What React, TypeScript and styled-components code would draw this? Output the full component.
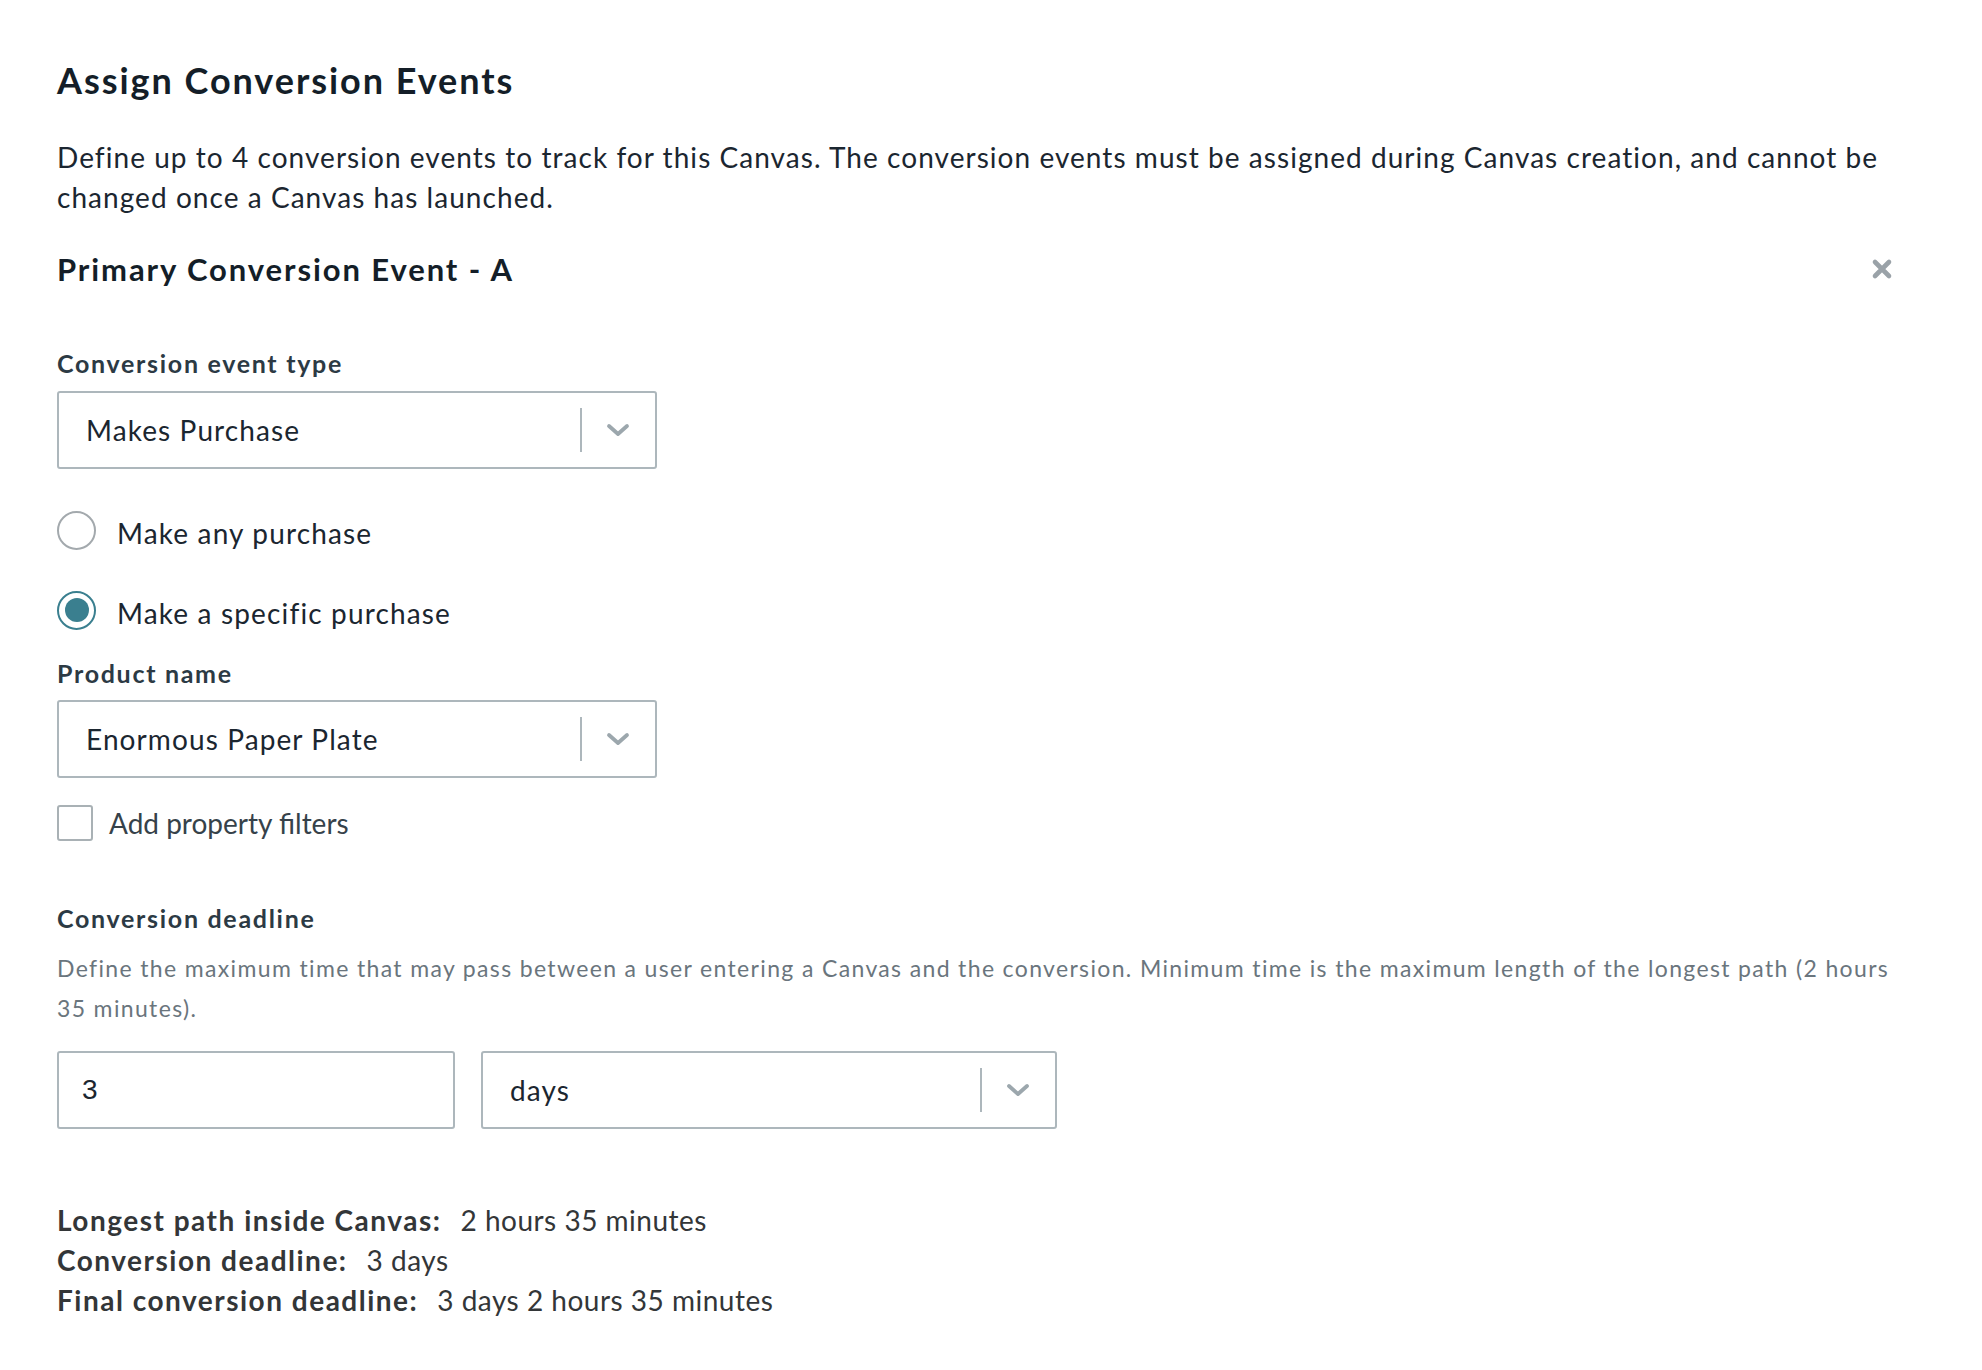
import React from "react";
import styled, { createGlobalStyle } from "styled-components";

const GlobalStyle = createGlobalStyle`
  html, body { margin: 0; padding: 0; background: #ffffff; }
  body {
    font-family: "Lato", "Noto Sans", "Liberation Sans", sans-serif;
    color: #1e2a33;
    -webkit-font-smoothing: antialiased;
  }
  * { box-sizing: border-box; }
`;

const Page = styled.main`
  padding: 58px 88px 60px 57px;
  width: 1982px;
`;

const Title = styled.h1`
  margin: 0;
  font-size: 36px;
  line-height: 44px;
  font-weight: 700;
  letter-spacing: 1.95px;
  color: #141e28;
`;

const Intro = styled.p`
  margin: 35px 0 0;
  font-size: 28px;
  line-height: 40px;
  letter-spacing: 1.05px;
  color: #1b2630;
`;

const SectionHeader = styled.div`
  margin-top: 32px;
  display: flex;
  align-items: center;
  justify-content: space-between;
  height: 40px;
`;

const SectionTitle = styled.h2`
  margin: 0;
  font-size: 31px;
  line-height: 40px;
  font-weight: 700;
  letter-spacing: 1.9px;
  color: #141e28;
`;

const CloseButton = styled.button`
  border: 0;
  background: none;
  padding: 0;
  width: 22px;
  height: 22px;
  margin-right: 1px;
  display: flex;
  align-items: center;
  justify-content: center;
  cursor: pointer;
`;

const FieldLabel = styled.div<{ $top: number }>`
  margin-top: ${(p) => p.$top}px;
  font-size: 25px;
  line-height: 32px;
  font-weight: 700;
  letter-spacing: 1.7px;
  color: #2c3a44;
`;

const SelectBox = styled.div<{ $width: number; $top: number }>`
  margin-top: ${(p) => p.$top}px;
  width: ${(p) => p.$width}px;
  height: 78px;
  border: 2px solid #adb7bc;
  border-radius: 3px;
  display: flex;
  align-items: center;
  background: #fff;
`;

const SelectValue = styled.div`
  flex: 1;
  padding-left: 27px;
  font-size: 28px;
  letter-spacing: 1.1px;
  color: #1b2630;
  white-space: nowrap;
`;

const Divider = styled.div`
  width: 2px;
  height: 44px;
  background: #adb7bc;
`;

const ChevronSlot = styled.div`
  width: 73px;
  display: flex;
  align-items: center;
  justify-content: center;
  padding-right: 2px;
`;

const RadioGroup = styled.div`
  margin-top: 41px;
  display: flex;
  flex-direction: column;
  gap: 40px;
`;

const RadioRow = styled.label`
  display: flex;
  align-items: center;
  height: 40px;
  gap: 21px;
  font-size: 28px;
  letter-spacing: 1.15px;
  color: #1b2630;
  cursor: pointer;
`;

const RadioText = styled.span`
  padding-top: 5px;
`;

const RadioCircle = styled.span<{ $checked?: boolean }>`
  width: 39px;
  height: 39px;
  border-radius: 50%;
  border: 2px solid ${(p) => (p.$checked ? "#3a7f8f" : "#a3a9ad")};
  display: flex;
  align-items: center;
  justify-content: center;
  flex: none;
  &::after {
    content: "";
    width: 24px;
    height: 24px;
    border-radius: 50%;
    background: ${(p) => (p.$checked ? "#3a7f8f" : "transparent")};
  }
`;

const CheckRow = styled.label`
  margin-top: 27px;
  display: flex;
  align-items: center;
  height: 36px;
  gap: 16px;
  font-size: 28px;
  color: #36424a;
  cursor: pointer;
`;

const CheckBox = styled.span`
  width: 36px;
  height: 36px;
  border: 2px solid #a9b1b5;
  border-radius: 3px;
  flex: none;
`;

const HelpText = styled.p`
  margin: 14px 0 0;
  font-size: 23px;
  line-height: 40px;
  letter-spacing: 1.35px;
  color: #6a757d;
`;

const InputRow = styled.div`
  margin-top: 23px;
  display: flex;
  gap: 26px;
`;

const NumberInput = styled.input`
  width: 398px;
  height: 78px;
  border: 2px solid #adb7bc;
  border-radius: 3px;
  padding: 0 0 0 23px;
  font-family: "Liberation Sans", Arial, sans-serif;
  font-size: 28px;
  color: #1b2630;
  outline: none;
  background: #fff;
`;

const Summary = styled.div`
  margin-top: 71px;
  display: flex;
  flex-direction: column;
`;

const SummaryLine = styled.div`
  font-size: 28px;
  line-height: 40px;
  letter-spacing: 0.5px;
  color: #333638;
`;

const SummaryLabel = styled.span`
  font-weight: 700;
  letter-spacing: 1.5px;
  margin-right: 19px;
`;

const CloseIcon = () => (
  <svg width="22" height="22" viewBox="0 0 22 22" aria-hidden="true">
    <path
      d="M4 4 L18 18 M18 4 L4 18"
      stroke="#9aa2a8"
      strokeWidth="4.6"
      strokeLinecap="round"
      fill="none"
    />
  </svg>
);

const ChevronIcon = () => (
  <svg width="24" height="14" viewBox="0 0 24 14" aria-hidden="true">
    <path
      d="M3 3 L12 11 L21 3"
      stroke="#9ca7ad"
      strokeWidth="3.8"
      strokeLinecap="round"
      strokeLinejoin="round"
      fill="none"
    />
  </svg>
);

const Select = ({ value, width, top }: { value: string; width: number; top: number }) => (
  <SelectBox $width={width} $top={top}>
    <SelectValue>{value}</SelectValue>
    <Divider />
    <ChevronSlot>
      <ChevronIcon />
    </ChevronSlot>
  </SelectBox>
);

export default function App() {
  return (
    <>
      <GlobalStyle />
      <Page>
        <Title>Assign Conversion Events</Title>
        <Intro>
          Define up to 4 conversion events to track for this Canvas. The conversion events must be assigned during Canvas creation, and cannot be
          <br />
          changed once a Canvas has launched.
        </Intro>

        <SectionHeader>
          <SectionTitle>Primary Conversion Event - A</SectionTitle>
          <CloseButton aria-label="Remove">
            <CloseIcon />
          </CloseButton>
        </SectionHeader>

        <FieldLabel $top={58}>Conversion event type</FieldLabel>
        <Select value="Makes Purchase" width={600} top={12} />

        <RadioGroup>
          <RadioRow>
            <RadioCircle />
            <RadioText>Make any purchase</RadioText>
          </RadioRow>
          <RadioRow>
            <RadioCircle $checked />
            <RadioText>Make a specific purchase</RadioText>
          </RadioRow>
        </RadioGroup>

        <FieldLabel $top={27}>Product name</FieldLabel>
        <Select value="Enormous Paper Plate" width={600} top={11} />

        <CheckRow>
          <CheckBox />
          Add property filters
        </CheckRow>

        <FieldLabel $top={61}>Conversion deadline</FieldLabel>
        <HelpText>
          Define the maximum time that may pass between a user entering a Canvas and the conversion. Minimum time is the maximum length of the longest path (2 hours
          <br />
          35 minutes).
        </HelpText>

        <InputRow>
          <NumberInput defaultValue="3" />
          <Select value="days" width={576} top={0} />
        </InputRow>

        <Summary>
          <SummaryLine>
            <SummaryLabel>Longest path inside Canvas:</SummaryLabel>2 hours 35 minutes
          </SummaryLine>
          <SummaryLine>
            <SummaryLabel>Conversion deadline:</SummaryLabel>3 days
          </SummaryLine>
          <SummaryLine>
            <SummaryLabel>Final conversion deadline:</SummaryLabel>3 days 2 hours 35 minutes
          </SummaryLine>
        </Summary>
      </Page>
    </>
  );
}
